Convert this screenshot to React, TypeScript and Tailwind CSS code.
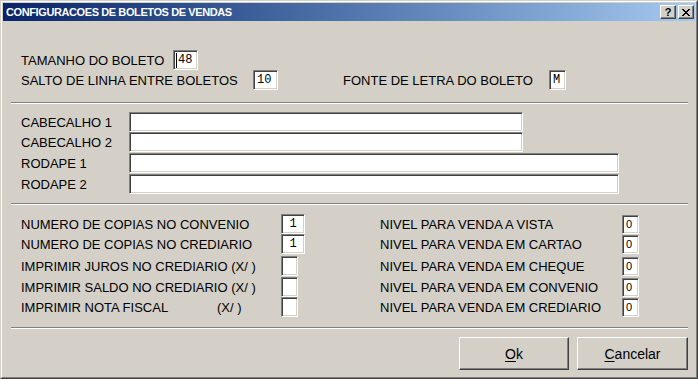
import React from "react";

const field =
  "box-border bg-white border border-t-[#808080] border-l-[#808080] border-b-white border-r-white shadow-[inset_1px_1px_0_#404040,inset_-1px_-1px_0_#d4d0c8]";

function Sep() {
  return <div className="ml-[8px] w-[677px] h-[2px] border-t border-t-[#808080] border-b border-b-white" />;
}

function CapBtn({ children }: { children: React.ReactNode }) {
  return (
    <div className="box-border w-[16px] h-[14px] bg-[#d4d0c8] border border-t-white border-l-white border-r-[#404040] border-b-[#404040] shadow-[inset_-1px_-1px_0_#808080] flex items-center justify-center">
      {children}
    </div>
  );
}

function Btn({ w, first, rest }: { w: string; first: string; rest: string }) {
  return (
    <div
      className={`box-border ${w} h-[33px] bg-[#d4d0c8] border border-t-white border-l-white border-r-[#404040] border-b-[#404040] shadow-[inset_-1px_-1px_0_#808080] flex items-center justify-center text-[14px]`}
    >
      <span>
        <span className="underline underline-offset-2">{first}</span>
        {rest}
      </span>
    </div>
  );
}

export default function App() {
  const leftRows: { label: React.ReactNode; val: string; wide: boolean; mt: string }[] = [
    { label: "NUMERO DE COPIAS NO CONVENIO", val: "1", wide: true, mt: "mt-0" },
    { label: "NUMERO DE COPIAS NO CREDIARIO", val: "1", wide: true, mt: "mt-0" },
    { label: "IMPRIMIR JUROS NO CREDIARIO (X/ )", val: "", wide: false, mt: "mt-[2px]" },
    { label: "IMPRIMIR SALDO NO CREDIARIO (X/ )", val: "", wide: false, mt: "mt-[1px]" },
    {
      label: (
        <>
          <span className="inline-block w-[196px]">IMPRIMIR NOTA FISCAL</span>
          <span>(X/ )</span>
        </>
      ),
      val: "",
      wide: false,
      mt: "mt-0",
    },
  ];
  const rightLabels = [
    "NIVEL PARA VENDA A VISTA",
    "NIVEL PARA VENDA EM CARTAO",
    "NIVEL PARA VENDA EM CHEQUE",
    "NIVEL PARA VENDA EM CONVENIO",
    "NIVEL PARA VENDA EM CREDIARIO",
  ];

  return (
    <div className="w-[698px] h-[379px] box-border bg-[#d4d0c8] border border-t-[#d4d0c8] border-l-[#d4d0c8] border-r-[#404040] border-b-[#404040] font-['Liberation_Sans',Arial,sans-serif] text-[13px] text-black leading-none">
      <div className="box-border h-full border border-t-white border-l-white border-r-[#808080] border-b-[#808080] p-px flex flex-col">
        {/* Title bar */}
        <div className="h-[18px] shrink-0 flex items-center pl-[3px] pr-[1px] bg-gradient-to-r from-[#0a246a] to-[#a6caf0]">
          <span className="text-white font-bold text-[11px] tracking-[-0.4px]">
            CONFIGURACOES DE BOLETOS DE VENDAS
          </span>
          <div className="ml-auto flex gap-[2px]">
            <CapBtn>
              <span className="font-bold text-[11px] leading-none mt-[1px]">?</span>
            </CapBtn>
            <CapBtn>
              <svg width="8" height="7" viewBox="0 0 8 7" shapeRendering="crispEdges">
                <path
                  fill="#000"
                  d="M0 0h2v1h-2zM6 0h2v1h-2zM1 1h2v1h-2zM5 1h2v1h-2zM2 2h4v1h-4zM3 3h2v1h-2zM2 4h4v1h-4zM1 5h2v1h-2zM5 5h2v1h-2zM0 6h2v1h-2zM6 6h2v1h-2z"
                />
              </svg>
            </CapBtn>
          </div>
        </div>

        {/* Body */}
        <div className="flex-1 flex flex-col">
          {/* Section 1 */}
          <div className="mt-[29px] pl-[18px] flex flex-col">
            <div className="h-[20px] flex items-center">
              <span className="w-[152px]">TAMANHO DO BOLETO</span>
              <div className={`${field} w-[25px] h-[20px] flex items-center pl-[2px] font-['Liberation_Mono',monospace] text-[12px]`}>
                <span className="w-px h-[15px] bg-black mr-[1px]" />
                48
              </div>
            </div>
            <div className="h-[20px] flex items-center">
              <span className="w-[232px]">SALTO DE LINHA ENTRE BOLETOS</span>
              <div className={`${field} w-[25px] h-[20px] flex items-center pl-[3px] font-['Liberation_Mono',monospace] text-[12px]`}>
                10
              </div>
              <span className="ml-[65px] w-[206px]">FONTE DE LETRA DO BOLETO</span>
              <div className={`${field} w-[17px] h-[20px] flex items-center pl-[3px] font-['Liberation_Mono',monospace] text-[12px]`}>
                M
              </div>
            </div>
          </div>

          <div className="mt-[12px]">
            <Sep />
          </div>

          {/* Section 2 */}
          <div className="mt-[8px] pl-[18px] flex flex-col">
            <div className="h-[20px] flex items-center">
              <span className="w-[108px]">CABECALHO 1</span>
              <div className={`${field} w-[394px] h-[20px]`} />
            </div>
            <div className="h-[20px] flex items-center">
              <span className="w-[108px]">CABECALHO 2</span>
              <div className={`${field} w-[394px] h-[20px]`} />
            </div>
            <div className="mt-[1px] h-[20px] flex items-center">
              <span className="w-[108px]">RODAPE 1</span>
              <div className={`${field} w-[490px] h-[20px]`} />
            </div>
            <div className="mt-[1px] h-[20px] flex items-center">
              <span className="w-[108px]">RODAPE 2</span>
              <div className={`${field} w-[490px] h-[20px]`} />
            </div>
          </div>

          <div className="mt-[9px]">
            <Sep />
          </div>

          {/* Section 3 */}
          <div className="mt-[9px] pl-[18px] flex flex-col">
            {leftRows.map((r, i) => (
              <div key={i} className={`${r.mt} h-[20px] flex items-center`}>
                <div className="w-[359px] flex items-center">
                  <span className="w-[260px]">{r.label}</span>
                  <div
                    className={`${field} ${r.wide ? "w-[24px]" : "w-[17px]"} h-[20px] flex items-center justify-center font-['Liberation_Mono',monospace] text-[12px]`}
                  >
                    {r.val}
                  </div>
                </div>
                <span className="w-[242px]">{rightLabels[i]}</span>
                <div className={`${field} w-[17px] h-[19px] flex items-center pl-[3px] text-[11px]`}>0</div>
              </div>
            ))}
          </div>

          <div className="mt-[10px]">
            <Sep />
          </div>

          {/* Buttons */}
          <div className="mt-[8px] flex justify-end gap-[8px] pr-[7px]">
            <Btn w="w-[110px]" first="O" rest="k" />
            <Btn w="w-[111px]" first="C" rest="ancelar" />
          </div>
        </div>
      </div>
    </div>
  );
}
